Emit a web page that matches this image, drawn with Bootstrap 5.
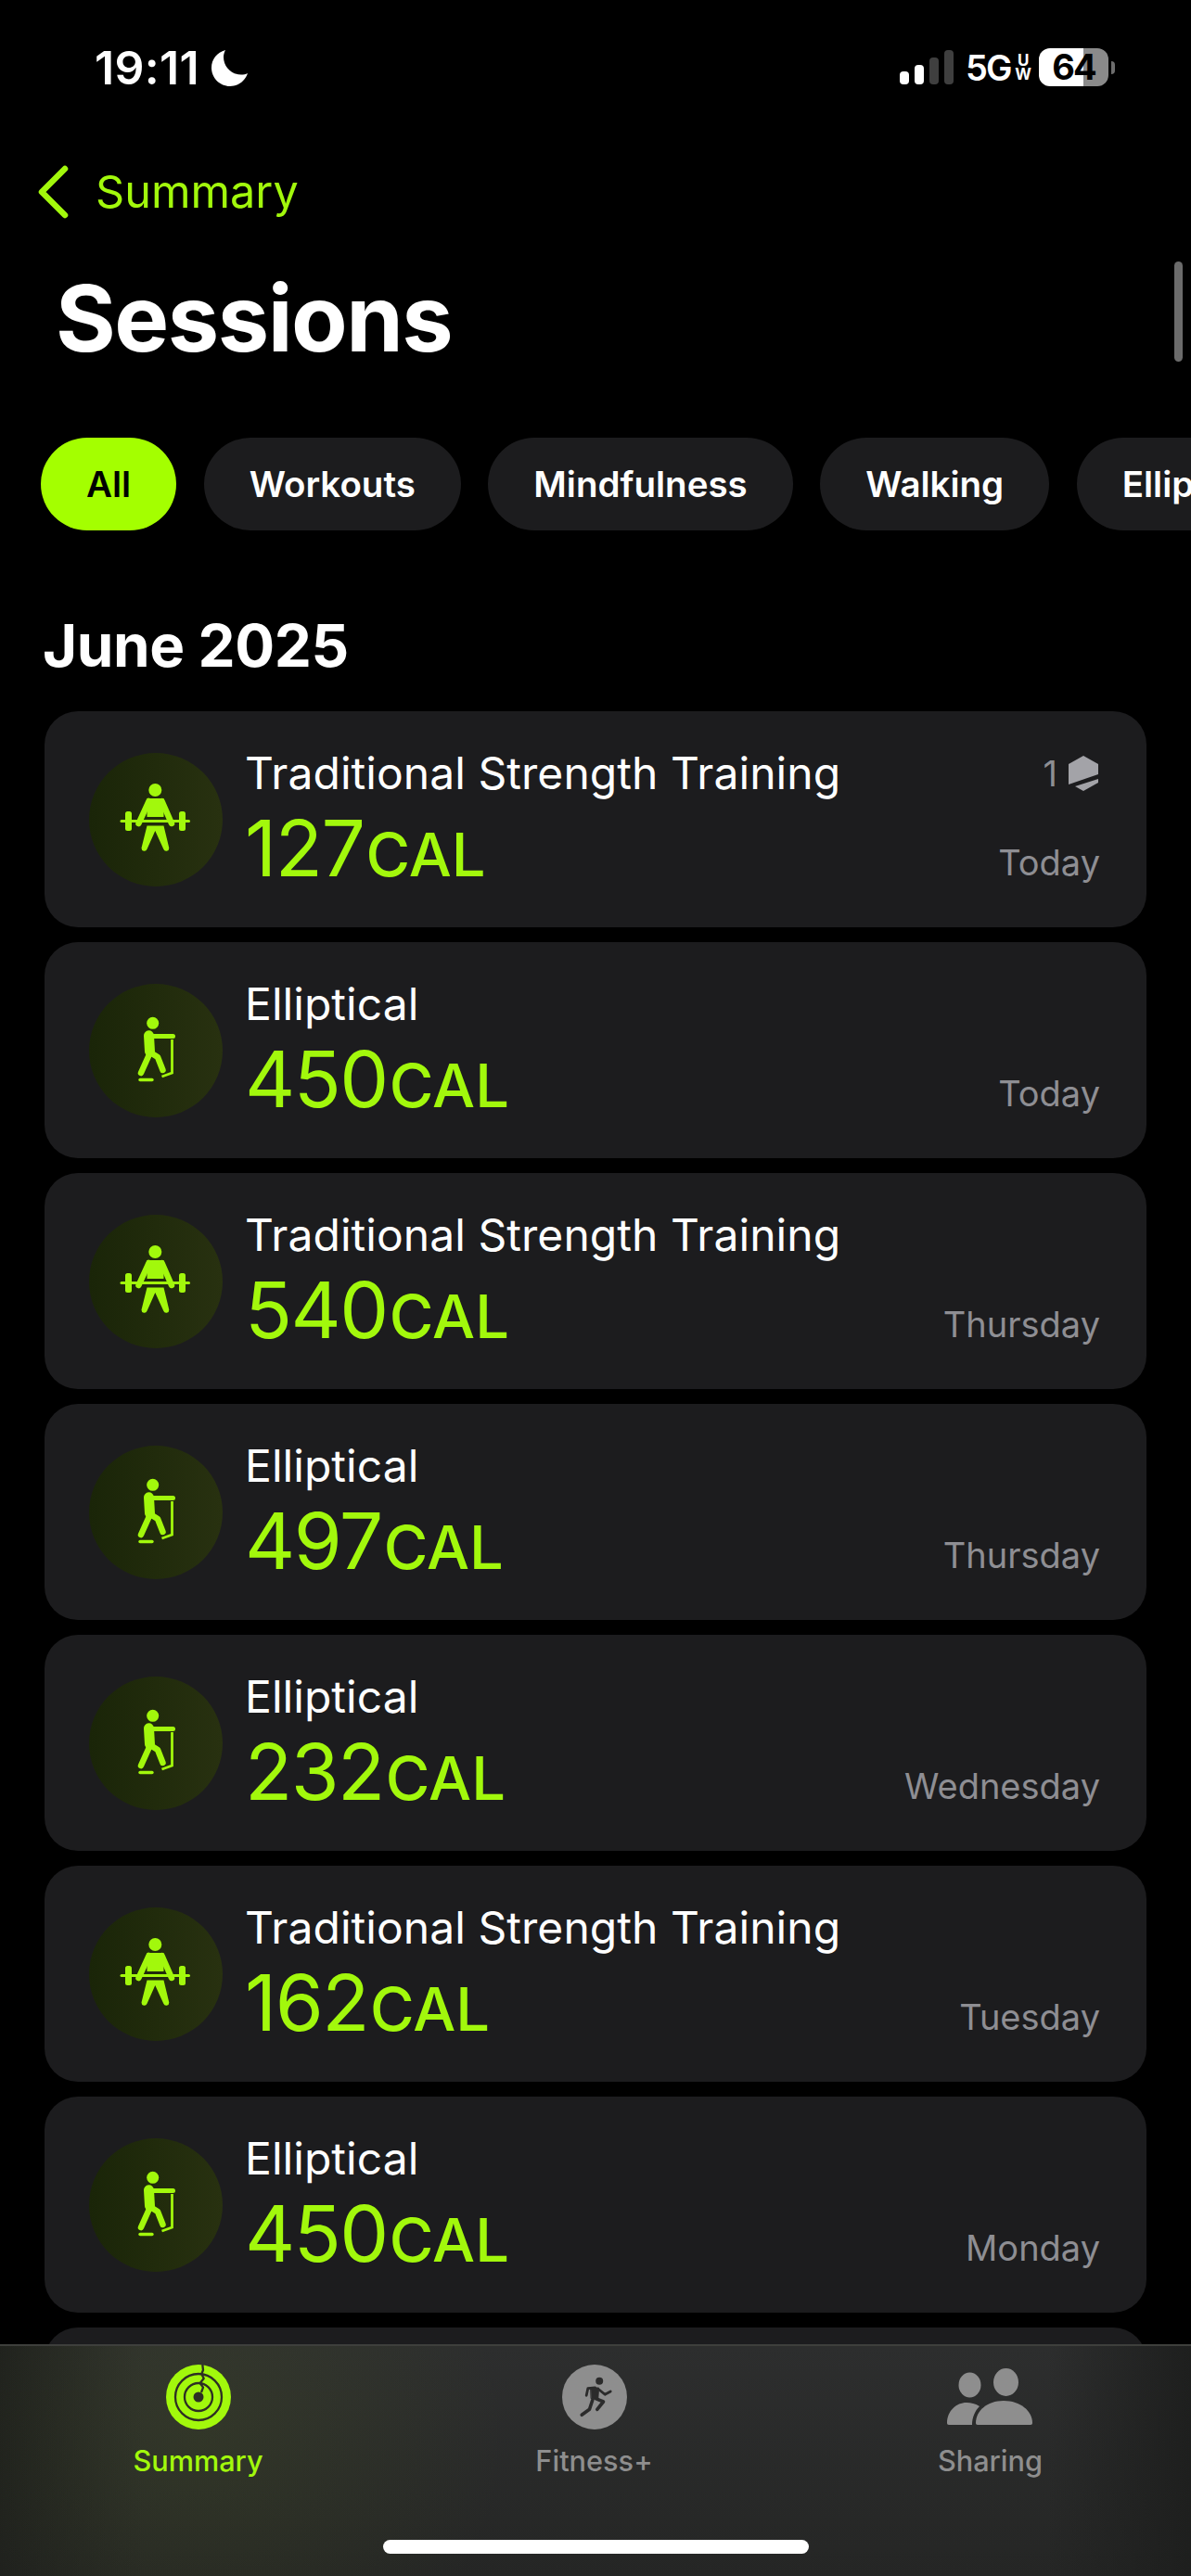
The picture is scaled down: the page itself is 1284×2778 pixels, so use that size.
<!DOCTYPE html>
<html lang="en">
<head>
<meta charset="utf-8">
<title>Sessions</title>
<link rel="stylesheet" href="https://cdn.jsdelivr.net/npm/bootstrap@5.3.0/dist/css/bootstrap.min.css">
<style>
html,body{background:#000;height:2778px;overflow:hidden}
body{font-family:Inter,"Noto Sans",sans-serif;color:#fff;position:relative}
.st-bar{height:175px;padding:52px 82px 0 102px}
.st-time{font-size:50px;font-weight:600;line-height:42px;letter-spacing:.3px}
.st-moon{width:40px;height:40px;margin-left:13px}
.st-bars{width:58px;height:37px;margin-right:13px}
.st-5g{font-size:38px;font-weight:600;line-height:38px;letter-spacing:-2px}
.st-uw{font-size:17px;font-weight:700;line-height:15px;margin:0 8px 0 5px;text-align:center}
.st-bat{width:75px;height:41px;border-radius:12px;background:linear-gradient(90deg,#fff 64%,#8a8a8a 64%);color:#000;font-size:38px;font-weight:700;line-height:41px;text-align:center;letter-spacing:-2px}
.st-tip{width:4px;height:14px;margin-left:3px;border-radius:0 4px 4px 0;background:#6d6d6d}
.back-row{height:64px;padding-left:40px;font-size:48.600px;line-height:64px}
.back-ico{width:34px;height:58px;margin-right:29px}
.back-txt{color:#a2f80c}
.page-ttl{font-size:99px;font-weight:700;line-height:112px;margin:48px 0 0 60px;letter-spacing:-1.500px}
.scroll-ind{position:absolute;left:1266px;top:282px;width:9px;height:108px;border-radius:5px;background:#6b6b6b}
.pill-row{gap:29.500px;margin:73px 0 0 44px;white-space:nowrap}
.pill-btn{height:100px;border-radius:50px;background:#1c1c1e;color:#fff;font-size:38.500px;font-weight:600;line-height:100px;padding:0 49px;border:0;flex:none}
.pill-on{background:#a4ff00;color:#000}
.sec-ttl{font-size:63.700px;font-weight:700;line-height:74px;margin:87px 0 0 46px;letter-spacing:-.4px}
.sess-list{gap:16px;margin:34px 48px 0}
.sess-card{height:233px;background:#1c1c1e;border:0;border-radius:36px;flex-direction:row;align-items:center;padding-left:48px;flex:none}
.sess-disc{width:144px;height:144px;border-radius:50%;background:linear-gradient(90deg,#1a2508,#283110);flex:none;margin-right:24px}
.sess-disc svg{display:block;width:144px;height:144px;fill:#a2f80c;stroke:#a2f80c}
.sess-main{flex:1;height:233px;padding-top:38px}
.sess-name{font-size:48px;line-height:58px;color:#fff;letter-spacing:.05px}
.sess-val{font-size:84px;line-height:92px;color:#a2f80c;letter-spacing:-1.500px;margin-top:6px}
.sess-unit{font-size:65px;font-weight:500;margin-left:2px;letter-spacing:0}
.sess-side{height:233px;padding:44px 50px 47px 0;text-align:right;color:#8e8e93;font-size:38px}
.sess-date{line-height:46px;margin-top:auto}
.sess-badge{line-height:46px;gap:10px}
.sess-hex{width:36px;height:38px;fill:#a3a3a8}
.tab-bar{position:absolute;left:0;right:0;top:2528px;height:250px;padding-right:3px;border-top:2px solid #3e3f3c;background:radial-gradient(ellipse 330px 300px at 213px 40%,rgba(105,135,25,.13),transparent),linear-gradient(90deg,#1e1f1e 0,rgba(30,31,30,0) 12%,rgba(30,31,30,0) 88%,#1e1f1e 100%),linear-gradient(180deg,#2d2e2e,#252625)}
.tab-item{color:#8e8e8e;font-size:30.700px;font-weight:500;padding-top:19px;line-height:38px;text-align:center}
.tab-item svg{display:block;width:120px;height:72px;margin:0 auto 14px}
.tab-on{color:#a2f80c}
.home-bar{position:absolute;left:413px;top:2739px;width:459px;height:15px;border-radius:8px;background:#fff}
</style>
</head>
<body>
<svg width="0" height="0" class="position-absolute">
  <symbol id="ico-lift" viewBox="0 0 144 144">
    <circle cx="71.300" cy="40" r="7" stroke="none"/>
    <path d="M62.500 49h18v20h-18z" stroke="none"/>
    <path d="M64.500 52L53.500 76M78.500 52L89 76" stroke-width="6.500" stroke-linecap="round" fill="none"/>
    <path d="M35 73.500h72.500" stroke-width="3" stroke-linecap="round" fill="none"/>
    <rect x="39" y="63" width="7" height="21" rx="2.500" stroke="none"/>
    <rect x="97" y="63" width="7" height="21" rx="2.500" stroke="none"/>
    <path d="M62.500 78.500h18l5.800 24a3.100 3.100 0 0 1-6 1.200L71.300 84l-8.800 19.700a3.100 3.100 0 0 1-6-1.200z" stroke="none"/>
  </symbol>
  <symbol id="ico-ellip" viewBox="0 0 144 144">
    <circle cx="68.700" cy="42.300" r="6.500" stroke="none"/>
    <path d="M64.500 55.800L65.500 73" stroke-width="11" stroke-linecap="round" fill="none"/>
    <path d="M66 56.500H90.500" stroke-width="5" stroke-linecap="round" fill="none"/>
    <path d="M66 74l8 5 5.500 14M65 76L56 96" stroke-width="6.500" stroke-linecap="round" stroke-linejoin="round" fill="none"/>
    <path d="M89.500 60V96l-11 4" stroke-width="2.800" fill="none"/>
    <path d="M55 103.500H68" stroke-width="3.400" stroke-linecap="round" fill="none"/>
  </symbol>
</svg>

<header class="st-bar d-flex justify-content-between align-items-start">
  <div class="d-flex align-items-center">
    <span class="st-time">19:11</span>
    <svg class="st-moon" viewBox="0 0 40 40"><path fill="#fff" d="M15 1C6 3.500 0 11 0 20c0 11 9 20 20 20 9 0 16.500-6 19-14-2 1-4.500 1.500-7 1.500C21.500 27.500 13 19 13 8.500 13 6 13.800 3.200 15 1z"/></svg>
  </div>
  <div class="d-flex align-items-center">
    <svg class="st-bars" viewBox="0 0 58 37">
      <rect x="0" y="23" width="10" height="14" rx="4" fill="#fff"/>
      <rect x="16" y="16" width="10" height="21" rx="4" fill="#fff"/>
      <rect x="32" y="8" width="10" height="29" rx="4" fill="#3f3f3f"/>
      <rect x="48" y="0" width="10" height="37" rx="4" fill="#3f3f3f"/>
    </svg>
    <span class="st-5g">5G</span>
    <span class="st-uw">U<br>W</span>
    <span class="st-bat">64</span>
    <span class="st-tip"></span>
  </div>
</header>

<a class="back-row d-flex align-items-center text-decoration-none" href="#">
  <svg class="back-ico" viewBox="0 0 34 58"><path d="M30 4L5 29l25 25" fill="none" stroke="#a2f80c" stroke-width="6.500" stroke-linecap="round" stroke-linejoin="round"/></svg>
  <span class="back-txt">Summary</span>
</a>

<h1 class="page-ttl mb-0">Sessions</h1>
<div class="scroll-ind"></div>

<div class="pill-row d-flex overflow-hidden">
  <button class="pill-btn pill-on" type="button">All</button>
  <button class="pill-btn" type="button">Workouts</button>
  <button class="pill-btn" type="button">Mindfulness</button>
  <button class="pill-btn" type="button">Walking</button>
  <button class="pill-btn" type="button">Elliptical</button>
</div>

<h2 class="sec-ttl mb-0">June 2025</h2>

<main class="sess-list d-flex flex-column">
  <div class="card sess-card">
    <div class="sess-disc"><svg><use href="#ico-lift"/></svg></div>
    <div class="sess-main"><div class="sess-name">Traditional Strength Training</div><div class="sess-val">127<span class="sess-unit">CAL</span></div></div>
    <div class="sess-side d-flex flex-column align-items-end">
      <div class="sess-badge d-flex align-items-center">1
        <svg class="sess-hex" viewBox="0 0 36 38"><path d="M18 0l16 9v11L2 31V9z"/><path d="M34 25v4l-16 9-9-5z"/></svg>
      </div>
      <div class="sess-date">Today</div>
    </div>
  </div>
  <div class="card sess-card">
    <div class="sess-disc"><svg><use href="#ico-ellip"/></svg></div>
    <div class="sess-main"><div class="sess-name">Elliptical</div><div class="sess-val">450<span class="sess-unit">CAL</span></div></div>
    <div class="sess-side d-flex flex-column align-items-end"><div class="sess-date">Today</div></div>
  </div>
  <div class="card sess-card">
    <div class="sess-disc"><svg><use href="#ico-lift"/></svg></div>
    <div class="sess-main"><div class="sess-name">Traditional Strength Training</div><div class="sess-val">540<span class="sess-unit">CAL</span></div></div>
    <div class="sess-side d-flex flex-column align-items-end"><div class="sess-date">Thursday</div></div>
  </div>
  <div class="card sess-card">
    <div class="sess-disc"><svg><use href="#ico-ellip"/></svg></div>
    <div class="sess-main"><div class="sess-name">Elliptical</div><div class="sess-val">497<span class="sess-unit">CAL</span></div></div>
    <div class="sess-side d-flex flex-column align-items-end"><div class="sess-date">Thursday</div></div>
  </div>
  <div class="card sess-card">
    <div class="sess-disc"><svg><use href="#ico-ellip"/></svg></div>
    <div class="sess-main"><div class="sess-name">Elliptical</div><div class="sess-val">232<span class="sess-unit">CAL</span></div></div>
    <div class="sess-side d-flex flex-column align-items-end"><div class="sess-date">Wednesday</div></div>
  </div>
  <div class="card sess-card">
    <div class="sess-disc"><svg><use href="#ico-lift"/></svg></div>
    <div class="sess-main"><div class="sess-name">Traditional Strength Training</div><div class="sess-val">162<span class="sess-unit">CAL</span></div></div>
    <div class="sess-side d-flex flex-column align-items-end"><div class="sess-date">Tuesday</div></div>
  </div>
  <div class="card sess-card">
    <div class="sess-disc"><svg><use href="#ico-ellip"/></svg></div>
    <div class="sess-main"><div class="sess-name">Elliptical</div><div class="sess-val">450<span class="sess-unit">CAL</span></div></div>
    <div class="sess-side d-flex flex-column align-items-end"><div class="sess-date">Monday</div></div>
  </div>
  <div class="card sess-card"></div>
</main>

<nav class="tab-bar d-flex">
  <div class="tab-item tab-on flex-fill w-25">
    <svg viewBox="0 0 120 72">
      <circle cx="60" cy="36" r="35" fill="#a2f80c"/>
      <g fill="none" stroke="#2d2f24" stroke-width="2.300" stroke-linejoin="round">
        <circle cx="60" cy="36" r="25"/>
        <circle cx="60" cy="36" r="15"/>
        <path d="M64.300 1L65 7 63.300 11 65.700 16 61.700 21 65 25.700 63 31"/>
      </g>
      <circle cx="60" cy="36" r="5.500" fill="#2d2f24"/>
    </svg>
    Summary
  </div>
  <div class="tab-item flex-fill w-25">
    <svg viewBox="0 0 120 72">
      <circle cx="60" cy="36" r="35" fill="#8e8e8e"/>
      <g fill="#2b2b2b" stroke="#2b2b2b" stroke-linecap="round" stroke-linejoin="round">
        <circle cx="65.200" cy="18.700" r="4" stroke="none"/>
        <path d="M60.500 26l-7.700.7-1.600 7.600M64.500 27.700l6.700 5.600 6-3.300" fill="none" stroke-width="2.800"/>
        <path d="M61.200 37.700l8.300 3.300-6.700 8.300M57.800 39.300l-3.300 10-8.300 6" fill="none" stroke-width="3.600"/>
        <path d="M56 26h8.500l-.7 11.700h-7.300z" stroke-width="1"/>
      </g>
    </svg>
    Fitness+
  </div>
  <div class="tab-item flex-fill w-25">
    <svg viewBox="0 0 120 72">
      <g fill="#8e8e8e">
        <ellipse cx="37.500" cy="23" rx="12" ry="13.500"/>
        <ellipse cx="76.500" cy="20" rx="13.500" ry="15"/>
        <path d="M13 64c0-13 10-22 21-22 5 0 9 1 14 4-5 5-8 12-8 20H15c-1.300 0-2-.7-2-2z"/>
        <path d="M44 64c0-13 12-24 30-24s31 11 31 24c0 1.300-.7 2-2 2H46c-1.300 0-2-.7-2-2z"/>
      </g>
    </svg>
    Sharing
  </div>
</nav>
<div class="home-bar"></div>

<script src="https://cdn.jsdelivr.net/npm/bootstrap@5.3.0/dist/js/bootstrap.bundle.min.js"></script>
</body>
</html>
